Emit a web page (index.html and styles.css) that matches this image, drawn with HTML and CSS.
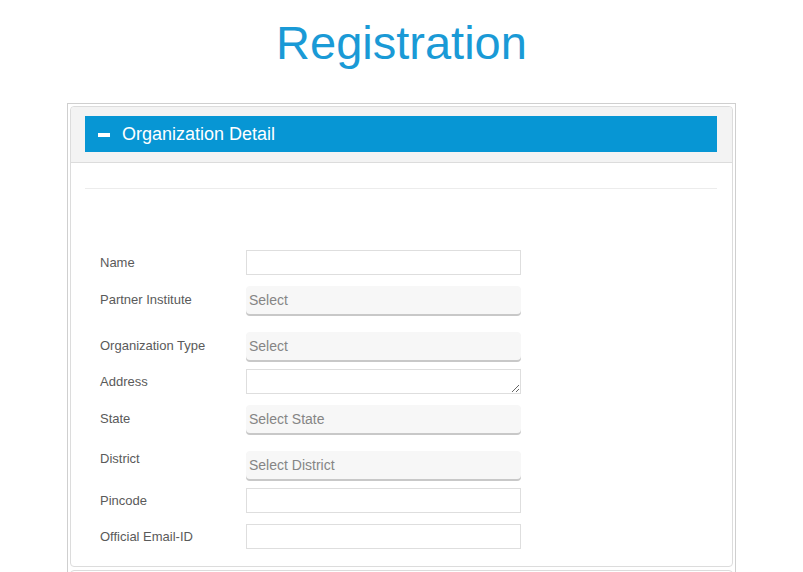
FILE: index.html
```html
<!DOCTYPE html>
<html lang="en">
<head>
<meta charset="utf-8">
<title>Registration</title>
<link rel="stylesheet" href="styles.css">
</head>
<body>
<h1 class="title">Registration</h1>
<div class="wrap">
  <div class="panel">
    <div class="panel-heading">
      <div class="panel-bar">
        <span class="minus"></span>
        <span class="panel-title">Organization Detail</span>
      </div>
    </div>
    <div class="panel-body">
      <hr class="sep">
      <form class="form">
        <div class="row">
          <label class="lbl">Name</label>
          <input class="inp" type="text">
        </div>
        <div class="row row-sel">
          <label class="lbl">Partner Institute</label>
          <select class="sel"><option>Select</option></select>
        </div>
        <div class="row row-tight">
          <label class="lbl">Organization Type</label>
          <select class="sel"><option>Select</option></select>
        </div>
        <div class="row">
          <label class="lbl">Address</label>
          <textarea class="inp area"></textarea>
        </div>
        <div class="row row-sel">
          <label class="lbl">State</label>
          <select class="sel"><option>Select State</option></select>
        </div>
        <div class="row row-tight row-top">
          <label class="lbl">District</label>
          <select class="sel"><option>Select District</option></select>
        </div>
        <div class="row">
          <label class="lbl">Pincode</label>
          <input class="inp" type="text">
        </div>
        <div class="row row-last">
          <label class="lbl">Official Email-ID</label>
          <input class="inp" type="text">
        </div>
      </form>
    </div>
  </div>
  <div class="panel panel-next"></div>
</div>
</body>
</html>
```

FILE: styles.css
```css
html, body {
  margin: 0;
  padding: 0;
  background: #fff;
  font-family: "Liberation Sans", Arial, sans-serif;
}

.title {
  margin: 0;
  padding-top: 14px;
  height: 103px;
  box-sizing: border-box;
  text-align: center;
  font-weight: normal;
  font-size: 47px;
  line-height: 58px;
  color: #1a9ad6;
}

.wrap {
  width: 669px;
  margin: 0 auto;
  border: 1px solid #cfcfcf;
  border-bottom: none;
  padding: 2px 2px 0 2px;
  box-sizing: border-box;
  height: 469px;
  overflow: hidden;
}

.panel {
  border: 1px solid #dcdcdc;
  border-radius: 4px;
  background: #fff;
}

.panel-heading {
  background: #f3f3f3;
  padding: 9px 15px 10px 14px;
  border-bottom: 1px solid #dcdcdc;
  border-radius: 4px 4px 0 0;
}

.panel-bar {
  background: #0796d4;
  height: 36px;
  display: flex;
  align-items: center;
  padding-left: 13px;
}

.minus {
  display: block;
  width: 12px;
  height: 4px;
  background: #fff;
  margin-right: 12px;
  margin-top: 1px;
}

.panel-title {
  color: #fff;
  font-size: 18px;
}

.panel-body {
  padding: 25px 15px 17px 14px;
}

.sep {
  margin: 0;
  border: none;
  border-top: 1px solid #ececec;
  height: 0;
}

.form {
  padding-top: 61px;
  padding-left: 15px;
}

.row {
  display: flex;
  align-items: center;
  margin-bottom: 11px;
}

.row-sel {
  margin-bottom: 18px;
}

.row-tight {
  margin-bottom: 9px;
}

.row-top {
  align-items: flex-start;
}

.row-last {
  margin-bottom: 0;
}

.lbl {
  width: 146px;
  flex: none;
  font-size: 13px;
  line-height: 16px;
  color: #5a5a5a;
}

.inp {
  width: 275px;
  height: 25px;
  box-sizing: border-box;
  border: 1px solid #dedede;
  margin: 0;
  padding: 2px 4px;
  font-family: inherit;
  font-size: 14px;
  background: #fff;
}

.area {
  display: block;
  resize: vertical;
}

.sel {
  -webkit-appearance: none;
  appearance: none;
  width: 275px;
  height: 28px;
  box-sizing: border-box;
  border: none;
  border-radius: 4px;
  background: #f7f7f7;
  box-shadow: 0 2px 0 #c8c8c8;
  padding: 0 3px;
  margin: 0;
  font-family: inherit;
  font-size: 14px;
  color: #858585;
  outline: none;
}

.panel-next {
  margin-top: 3px;
  height: 20px;
}
```
